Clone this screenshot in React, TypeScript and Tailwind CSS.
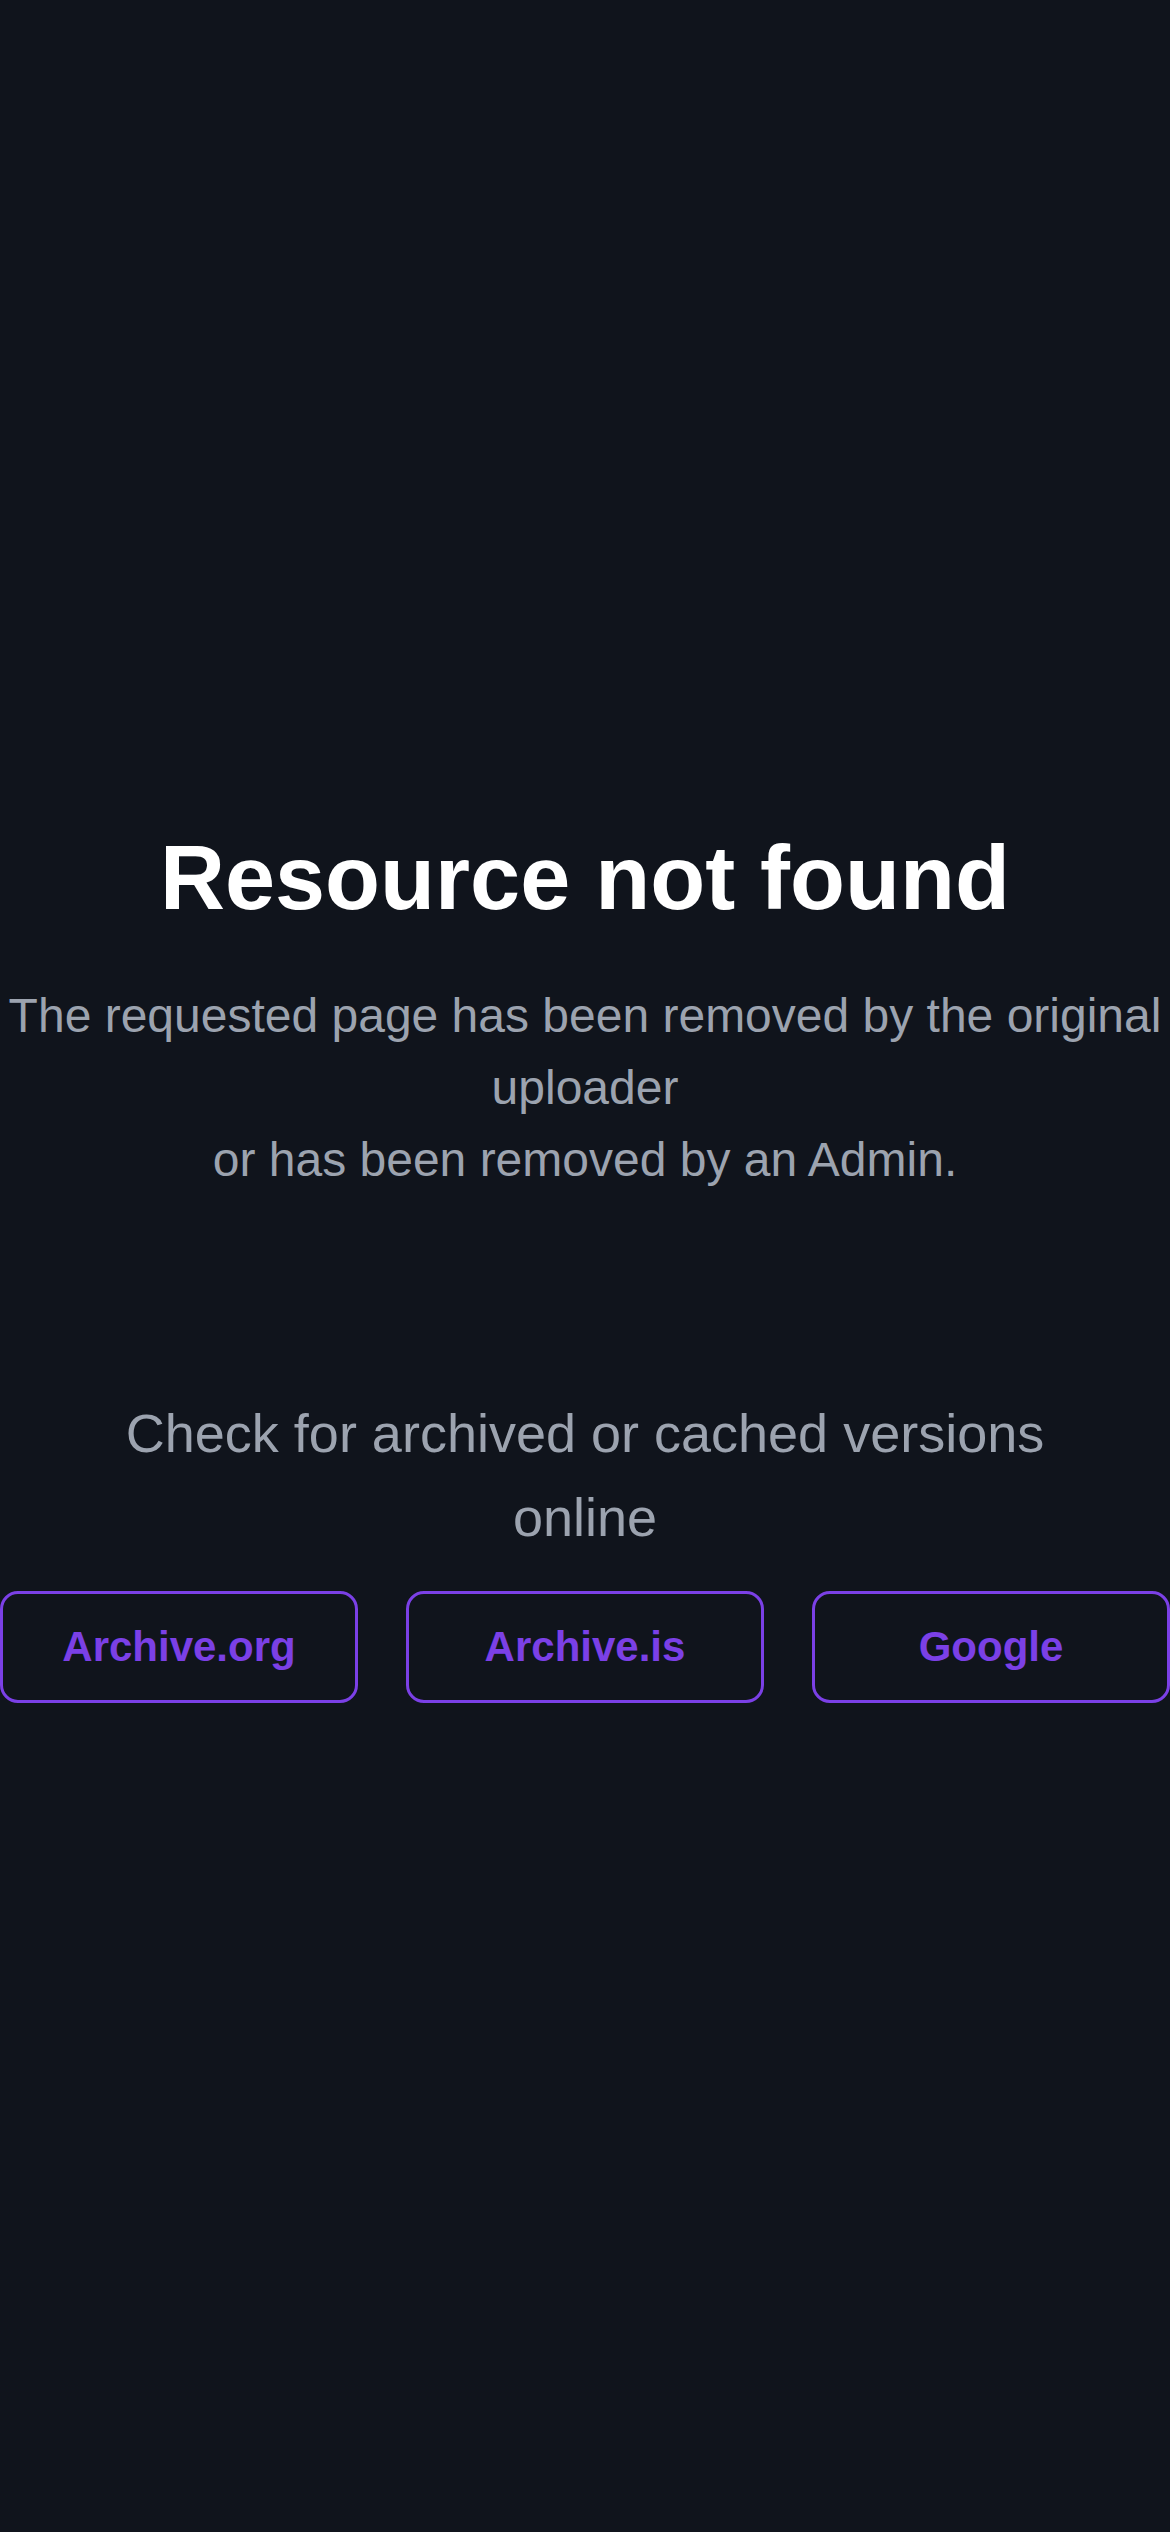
export default function App() {
  return (
    <div
      className="min-h-[2532px] w-full bg-[#10141c] flex flex-col justify-center items-center text-center pb-[6px]"
      style={{ fontFamily: '"Liberation Sans", Arial, sans-serif' }}
    >
      <div className="w-full">
        <h1 className="text-[90px] leading-[108px] font-bold text-white">Resource not found</h1>
        <p className="mt-[48px] text-[48px] leading-[72px] text-[#9ca3af]">
          The requested page has been removed by the original uploader
          <br />
          or has been removed by an Admin.
        </p>
        <h2 className="mt-[195px] px-[48px] text-[54px] leading-[84px] text-[#9ca3af]">
          Check for archived or cached versions online
        </h2>
        <div className="mt-[32px] grid grid-cols-3 gap-[48px]">
          <a className="flex items-center justify-center h-[112px] border-[3px] border-[#7b40e6] rounded-[18px] text-[42px] leading-[60px] font-bold text-[#7b40e6]">
            Archive.org
          </a>
          <a className="flex items-center justify-center h-[112px] border-[3px] border-[#7b40e6] rounded-[18px] text-[42px] leading-[60px] font-bold text-[#7b40e6]">
            Archive.is
          </a>
          <a className="flex items-center justify-center h-[112px] border-[3px] border-[#7b40e6] rounded-[18px] text-[42px] leading-[60px] font-bold text-[#7b40e6]">
            Google
          </a>
        </div>
      </div>
    </div>
  );
}
